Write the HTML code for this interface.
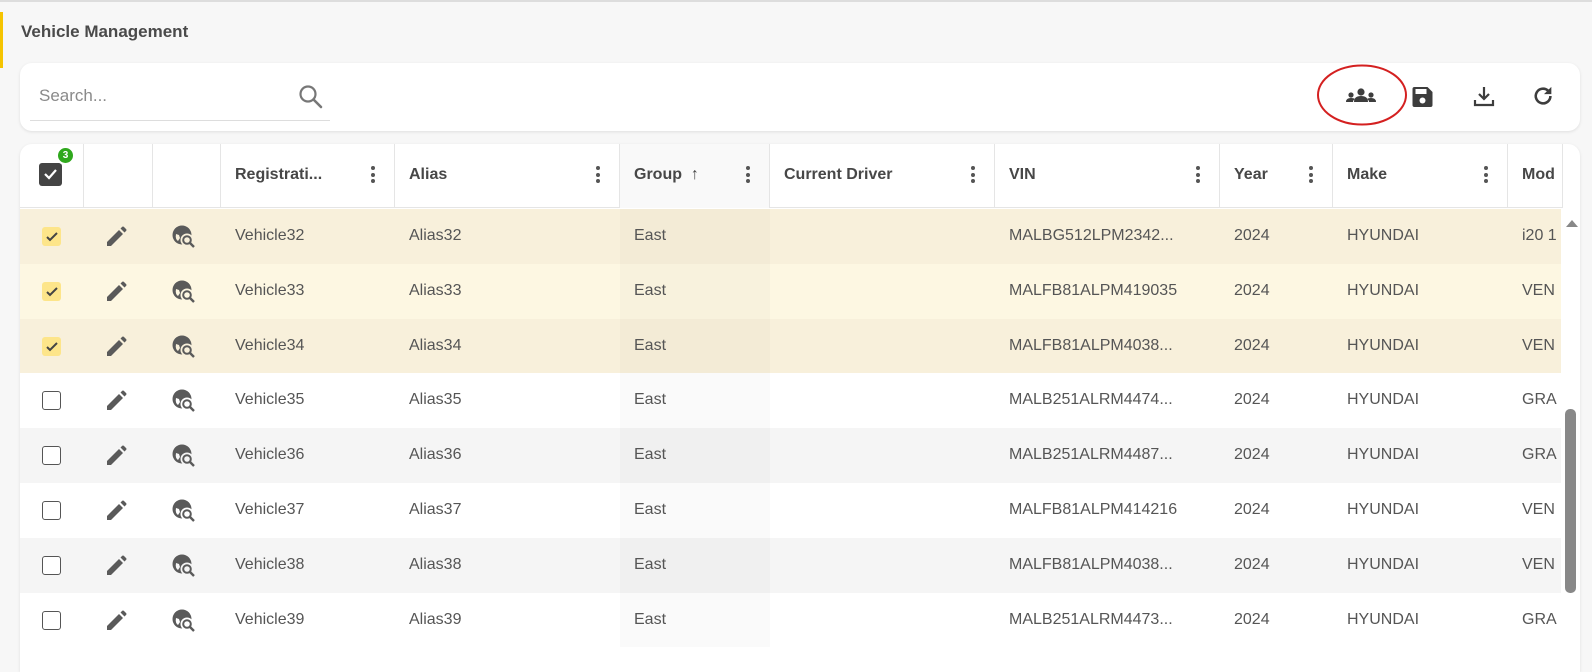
<!DOCTYPE html>
<html><head><meta charset="utf-8">
<style>
*{box-sizing:border-box;margin:0;padding:0}
body{width:1592px;height:652px;overflow:hidden;background:#f7f7f7;font-family:"Liberation Sans",sans-serif;position:relative;border-top:2px solid #ddd}
.stripe{position:absolute;left:0;top:10px;width:3px;height:56px;background:#f5c400}
.title{position:absolute;left:21px;top:20px;font-size:17px;font-weight:bold;color:#4a4a4a}
.card{position:absolute;left:20px;right:12px;background:#fff;border-radius:12px;box-shadow:0 1px 3px rgba(0,0,0,.1)}
.tb{top:61px;height:68px}
.search{position:absolute;left:39px;top:84px;font-size:17px;color:#8a8a8a}
.sline{position:absolute;left:30px;top:118px;width:300px;height:1px;background:#ddd}
.tbl{top:142px;bottom:-20px;overflow:hidden;border-radius:12px 12px 0 0}
.hdr{position:absolute;left:0;top:0;height:64px;width:1543px;border-bottom:1px solid #e5e5e5}
.hc{position:absolute;top:0;height:64px;border-right:1px solid #e5e5e5;font-size:16px;font-weight:bold;color:#474747;line-height:62px;padding-left:14px;white-space:nowrap;overflow:hidden}
.dots{position:absolute;top:22px;width:4px}
.dots i{display:block;width:4px;height:4px;border-radius:2px;background:#555;margin-bottom:2.5px}
.row{position:absolute;left:0;width:1541px;height:54.8px;font-size:16px;color:#555}
.row span{position:absolute;top:0;line-height:54px;white-space:nowrap}
.gtint{position:absolute;top:0;height:100%;left:600px;width:150px;background:rgba(0,0,0,.02)}
.cb{position:absolute;left:22px;top:18px;width:19px;height:19px;border:1.5px solid #555;border-radius:3px;background:#fff}
.cb.on{border:none;background:#fde58a}
.ico{position:absolute}
.sb{position:absolute;left:1541px;top:65px;width:20px;bottom:0;background:#fff}
</style></head><body>
<div class="stripe"></div>
<div class="title">Vehicle Management</div>
<div class="card tb"></div>
<div class="search">Search...</div>
<div class="sline"></div>
<svg style="position:absolute;left:298px;top:82px" width="26" height="26" viewBox="0 0 26 26"><circle cx="10" cy="10" r="7.5" fill="none" stroke="#777" stroke-width="2.2"/><path d="M15.5 15.5 L23 23" stroke="#777" stroke-width="2.6" stroke-linecap="round"/></svg>
<svg style="position:absolute;left:1345px;top:86px" width="32" height="16" viewBox="0 0 32 16"><circle cx="16" cy="4" r="3.6" fill="#3d3d3d"/><path d="M9 14 q0-6 7-6 q7 0 7 6z" fill="#3d3d3d"/><circle cx="6" cy="7" r="2.6" fill="#3d3d3d"/><path d="M1 14 q0-4 5-4 q3 0 4 1 q-2 1-2 3z" fill="#3d3d3d"/><circle cx="26" cy="7" r="2.6" fill="#3d3d3d"/><path d="M31 14 q0-4-5-4 q-3 0-4 1 q2 1 2 3z" fill="#3d3d3d"/></svg>
<svg style="position:absolute;left:1316px;top:62px" width="92" height="62"><ellipse cx="46" cy="31" rx="44" ry="29.5" fill="none" stroke="#d42020" stroke-width="2"/></svg>
<svg style="position:absolute;left:1410px;top:83px" width="25" height="24" viewBox="0 0 24 24"><path d="M2 4 q0-2 2-2 h13 l5 5 v13 q0 2-2 2 h-16 q-2 0-2-2z" fill="#3d3d3d"/><rect x="5" y="4" width="11" height="5" fill="#fff"/><circle cx="12" cy="15.5" r="3" fill="#fff"/></svg>
<svg style="position:absolute;left:1472px;top:82px" width="24" height="24" viewBox="0 0 24 24"><path d="M12 3 v12 M7 10 l5 5 5-5" stroke="#3d3d3d" stroke-width="2.2" fill="none"/><path d="M3 16 v5 h18 v-5" stroke="#3d3d3d" stroke-width="2.2" fill="none"/></svg>
<svg style="position:absolute;left:1532px;top:83px" width="24" height="22" viewBox="0 0 24 24"><path d="M19 12 a8 8 0 1 1 -2.5-5.8" stroke="#3d3d3d" stroke-width="2.8" fill="none"/><path d="M20 2 v8 h-8z" fill="#3d3d3d"/></svg>

<div class="card tbl">
 <div class="hdr">
  <div class="hc" style="left:0;width:64px"></div>
  <div class="hc" style="left:64px;width:69px"></div>
  <div class="hc" style="left:133px;width:68px"></div>
  <div class="hc" style="left:201px;width:174px">Registrati...</div>
  <div class="hc" style="left:375px;width:225px">Alias</div>
  <div class="hc" style="left:600px;width:150px;background:#f9f9f9">Group &nbsp;↑</div>
  <div class="hc" style="left:750px;width:225px">Current Driver</div>
  <div class="hc" style="left:975px;width:225px">VIN</div>
  <div class="hc" style="left:1200px;width:113px">Year</div>
  <div class="hc" style="left:1313px;width:175px">Make</div>
  <div class="hc" style="left:1488px;width:55px">Mod</div>
  <div class="dots" style="left:351px"><i></i><i></i><i></i></div>
  <div class="dots" style="left:576px"><i></i><i></i><i></i></div>
  <div class="dots" style="left:726px"><i></i><i></i><i></i></div>
  <div class="dots" style="left:951px"><i></i><i></i><i></i></div>
  <div class="dots" style="left:1176px"><i></i><i></i><i></i></div>
  <div class="dots" style="left:1289px"><i></i><i></i><i></i></div>
  <div class="dots" style="left:1464px"><i></i><i></i><i></i></div>
  <div style="position:absolute;left:19px;top:19px;width:23px;height:23px;border-radius:3px;background:#444"></div>
  <svg style="position:absolute;left:23px;top:24px" width="15" height="12"><path d="M2 6 l4 4 7-8" stroke="#fff" stroke-width="2.2" fill="none"/></svg>
  <div style="position:absolute;left:36px;top:2px;width:19px;height:19px;border-radius:10px;background:#2fa81d;border:2px solid #fff;color:#fff;font-size:10px;font-weight:bold;text-align:center;line-height:15px">3</div>
 </div>
 <div id="rows"></div>
 <div class="sb">
  <svg style="position:absolute;left:5px;top:10px" width="12" height="8"><path d="M0 8 L6 1 L12 8z" fill="#888"/></svg>
  <div style="position:absolute;left:4px;top:200px;width:11px;height:184px;border-radius:5px;background:#888"></div>
 </div>
</div>
<script>
const d=[["32","MALBG512LPM2342...","i20 1"],["33","MALFB81ALPM419035","VEN"],["34","MALFB81ALPM4038...","VEN"],["35","MALB251ALRM4474...","GRA"],["36","MALB251ALRM4487...","GRA"],["37","MALFB81ALPM414216","VEN"],["38","MALFB81ALPM4038...","VEN"],["39","MALB251ALRM4473...","GRA"]];
const bgs=["#f8f0db","#fdf7e2","#f8f0db","#fff","#f5f5f5","#fff","#f5f5f5","#fff"];
const pencil='<svg class="ico" style="left:84px;top:16px" width="24" height="24" viewBox="0 0 24 24"><path d="M3 21 v-4 L15 5 l4 4 L7 21z M16.5 3.5 l1.5-1.5 q1-1 2 0 l2 2 q1 1 0 2 l-1.5 1.5z" fill="#5a5a5a"/></svg>';
const globe='<svg class="ico" style="left:151px;top:15px" width="26" height="26" viewBox="0 0 26 26"><circle cx="11" cy="11" r="9.5" fill="#5a5a5a"/><path d="M5 10 l3 1 l1 3 l-2 3 q-3-2-2-7z" fill="BG"/><circle cx="16" cy="16" r="6.5" fill="BG"/><circle cx="16" cy="16" r="3.8" fill="none" stroke="#5a5a5a" stroke-width="2"/><path d="M19 19 l4 4" stroke="#5a5a5a" stroke-width="2.4"/></svg>';
let h='';
d.forEach((r,i)=>{const on=i<3;
h+=`<div class="row" style="top:${65+i*54.8}px;background:${bgs[i]}"><div class="gtint"></div>
<div class="cb${on?' on':''}"></div>${on?'<svg style="position:absolute;left:26px;top:23px" width="12" height="10"><path d="M1 5 l3 3 7-7" stroke="#444" stroke-width="2" fill="none"/></svg>':''}
${pencil}${globe.replace(/BG/g,bgs[i])}
<span style="left:215px">Vehicle${r[0]}</span><span style="left:389px">Alias${r[0]}</span><span style="left:614px">East</span>
<span style="left:989px">${r[1]}</span><span style="left:1214px">2024</span><span style="left:1327px">HYUNDAI</span><span style="left:1502px">${r[2]}</span></div>`;});
document.getElementById('rows').innerHTML=h;
</script>
</body></html>
